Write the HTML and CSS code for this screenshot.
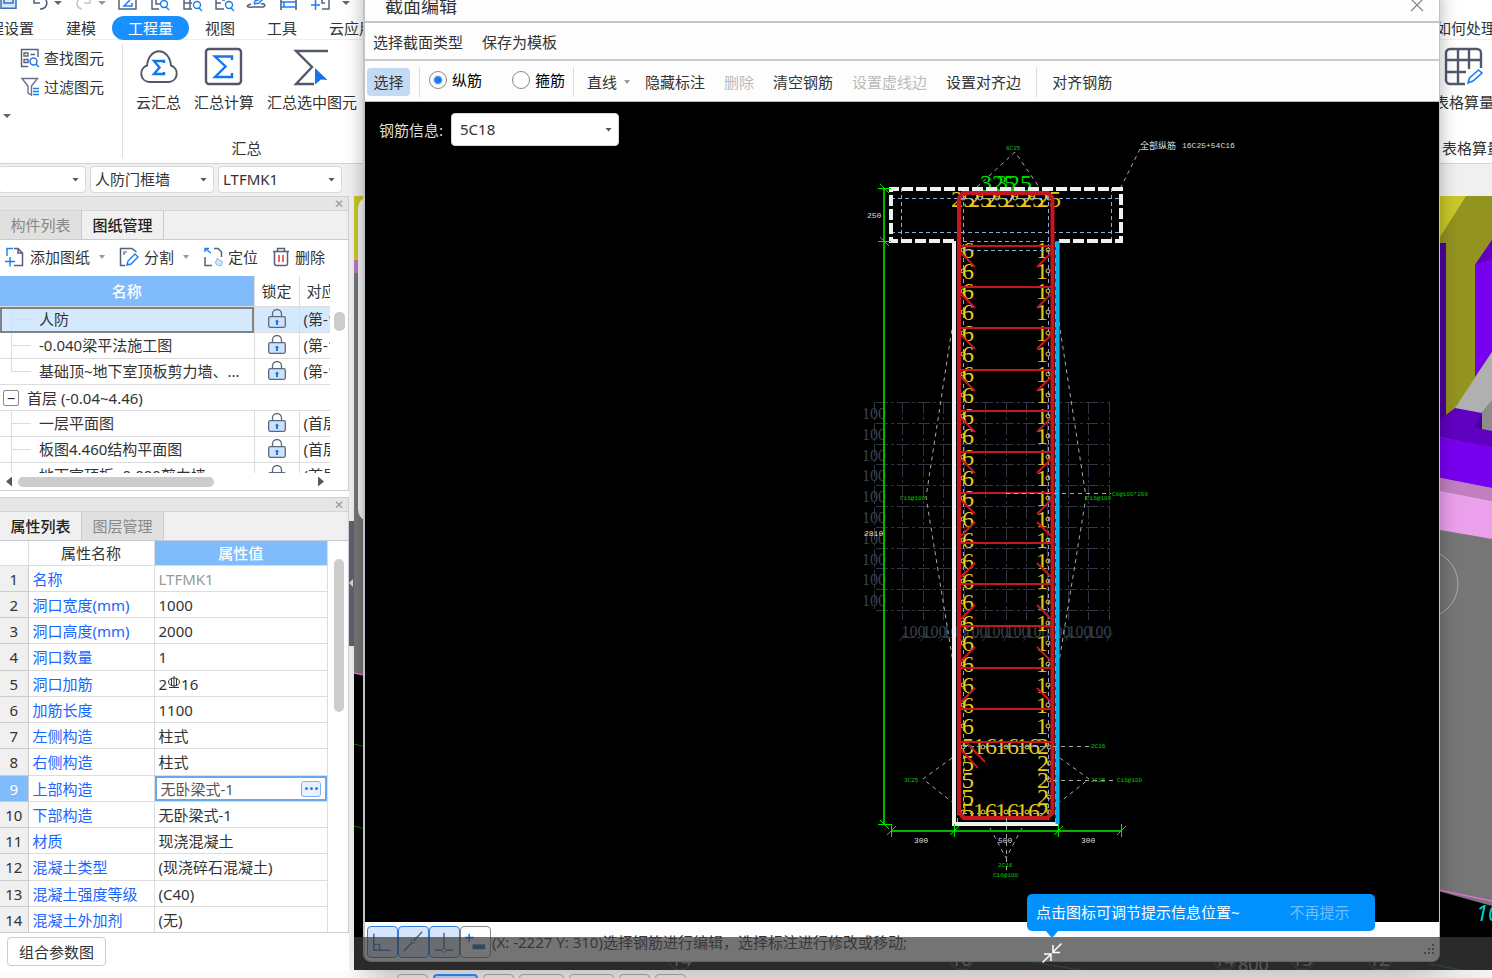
FILE: index.html
```
<!DOCTYPE html>
<html lang="zh-CN">
<head>
  <meta charset="UTF-8">
  <meta name="viewport" content="width=device-width, initial-scale=1.0">
  <title>截面编辑</title>
  <link rel="stylesheet" href="styles.css">
</head>
<body>
  <svg class="defs" aria-hidden="true">
    <symbol id="lock" viewBox="0 0 18 20">
      <path d="M4.500 9V6a4.500 4.500 0 0 1 9 0v3" fill="none" stroke="#5c6880" stroke-width="1.300"/>
      <rect x="0.700" y="8.700" width="16.600" height="10.600" rx="1.500" fill="#cfe2fb" stroke="#5c6880" stroke-width="1.300"/>
      <path d="M9 11.500l2.200 2.200H10V17H8v-3.300H6.800z" fill="#1876e8"/>
    </symbol>
    <symbol id="page" viewBox="0 0 20 20">
      <path d="M9 18.500h8.500V6L13 1.500H9M13 1.500V6h4.500" fill="none" stroke="#55607a" stroke-width="1.500"/>
    </symbol>
  </svg>

  <div class="app">
    <div class="quickbar">
      <svg viewBox="0 0 20 12"><path d="M3 0v8.200h15V0M6 0v3h9V0" fill="#d6e6fb" stroke="#3c6fb8" stroke-width="1.500"/></svg>
      <svg viewBox="0 0 20 12"><path d="M4 0v3h6M10 9c6 0 8-5 6-9" fill="none" stroke="#55607a" stroke-width="1.600"/></svg>
      <i class="caret tight"></i>
      <svg viewBox="0 0 20 12"><path d="M16 0v3h-6M8 9C3 8 2 4 4 0" fill="none" stroke="#c8c8c8" stroke-width="1.600"/></svg>
      <i class="caret tight pale"></i>
      <svg viewBox="0 0 20 12"><path d="M1 0v9h17V0" fill="none" stroke="#55607a" stroke-width="1.500"/><path d="M12 0L6 6h8V3" fill="none" stroke="#1b7ef0" stroke-width="1.500"/></svg>
      <svg viewBox="0 0 20 12"><path d="M2 0v9h7M6 0v4h4" fill="none" stroke="#55607a" stroke-width="1.500"/><circle cx="14" cy="4" r="3.500" fill="none" stroke="#1b7ef0" stroke-width="1.400"/><path d="M16 7l3 3" stroke="#1b7ef0" stroke-width="1.400"/></svg>
      <svg viewBox="0 0 20 12"><path d="M2 0v9h8M2 3h8M8 0v9" fill="none" stroke="#55607a" stroke-width="1.500"/><circle cx="15" cy="5" r="3.500" fill="none" stroke="#1b7ef0" stroke-width="1.400"/><path d="M17 8l3 3" stroke="#1b7ef0" stroke-width="1.400"/></svg>
      <svg viewBox="0 0 20 12"><path d="M2 0v9h8M2 3h5M8 0h3" fill="none" stroke="#55607a" stroke-width="1.500"/><circle cx="15" cy="5" r="3.500" fill="none" stroke="#1b7ef0" stroke-width="1.400"/><path d="M17 8l3 3" stroke="#1b7ef0" stroke-width="1.400"/></svg>
      <svg viewBox="0 0 20 12"><path d="M5 4c-6 2-4 4 2 3h10c3-1 2-4-2-3" fill="none" stroke="#55607a" stroke-width="1.500"/><path d="M8 4l1-3 6-2M8 4l5-1 4-4" fill="none" stroke="#1b7ef0" stroke-width="1.400"/></svg>
      <svg viewBox="0 0 20 12"><path d="M3 0v10M18 0v10" stroke="#55607a" stroke-width="1.600"/><path d="M3 2h15M3 7h15M6 2v5" fill="none" stroke="#1b7ef0" stroke-width="1.500"/></svg>
      <svg viewBox="0 0 20 12"><path d="M12 9h7V0M12 0v3h3" fill="none" stroke="#55607a" stroke-width="1.500"/><path d="M1 5h9M5.500 0v10" stroke="#1b7ef0" stroke-width="1.500"/></svg>
      <i class="caret"></i>
    </div>

    <nav class="tabs">
      <a href="#">工程设置</a>
      <a href="#">建模</a>
      <a href="#" class="active">工程量</a>
      <a href="#">视图</a>
      <a href="#">工具</a>
      <a href="#">云应用</a>
      <a href="#" class="help">如何处理</a>
    </nav>

    <div class="ribbon">
      <div class="group find">
        <button>
          <svg width="20" height="20" viewBox="0 0 20 20"><path d="M8 18.500H1.500v-17H18V9" fill="none" stroke="#55607a" stroke-width="1.400"/><path d="M4 5h4v3H4zM4 11.500h4v3H4zM10.500 6.500H15" fill="none" stroke="#55607a" stroke-width="1.300"/><circle cx="13.500" cy="13.500" r="3.500" fill="none" stroke="#1b7ef0" stroke-width="1.500"/><path d="M16 16l3 3" stroke="#1b7ef0" stroke-width="1.500"/></svg>
          查找图元
        </button>
        <button>
          <svg width="20" height="20" viewBox="0 0 20 20"><path d="M2 1.500h15.500L11.500 9v9l-3.500-2V9z" fill="none" stroke="#6b7284" stroke-width="1.400"/><path d="M13 11.500h6M13 14.500h6M13 17.500h6" stroke="#1b7ef0" stroke-width="1.500"/></svg>
          过滤图元
        </button>
        <i class="caret"></i>
      </div>
      <div class="group sum">
        <div class="tools">
          <button>
            <svg width="40" height="40" viewBox="0 0 40 40"><path d="M10 35a8.500 8.500 0 0 1-2-16.500C10-.5 30-.5 32 18.500A8.500 8.500 0 0 1 30 35z" fill="none" stroke="#50586a" stroke-width="2"/><path d="M25 16v-2H15l5.500 6.500L15 27h10v-2" fill="none" stroke="#1276ee" stroke-width="2.400"/></svg>
            云汇总
          </button>
          <button>
            <svg width="40" height="40" viewBox="0 0 40 40"><rect x="2" y="2" width="35" height="35" rx="3" fill="none" stroke="#50586a" stroke-width="2.400"/><path d="M28 13V9.500H11L21.500 19.500 11 30h17v-4" fill="none" stroke="#1276ee" stroke-width="2.400"/></svg>
            汇总计算
          </button>
          <button>
            <svg width="40" height="40" viewBox="0 0 40 40"><path d="M36 4H4l16 16L4 37h18" fill="none" stroke="#50586a" stroke-width="2.400"/><path d="M23 21l12.500 12-6.500-.5-6 5z" fill="#1276ee"/></svg>
            汇总选中图元
          </button>
        </div>
        <span class="caption">汇总</span>
      </div>
      <div class="group sheet">
        <button>
          <svg width="40" height="40" viewBox="0 0 40 40"><path d="M21 37H6a4 4 0 0 1-4-4V6a4 4 0 0 1 4-4h27a4 4 0 0 1 4 4v15M2 13h35M2 25h20M14 2v35M25 2v20" fill="none" stroke="#50586a" stroke-width="2.400"/><path d="M24 36l1.500-5 9-8 3.500 3-9 8z" fill="none" stroke="#1b7ef0" stroke-width="1.600"/></svg>
          表格算量
        </button>
        <span class="caption">表格算量</span>
      </div>
    </div>

    <div class="pickers">
      <span class="select first"><select aria-label="楼层"><option></option></select></span>
      <span class="select"><select aria-label="构件类型"><option>人防门框墙</option></select></span>
      <span class="select"><select aria-label="构件"><option>LTFMK1</option></select></span>
    </div>

    <div class="main">
      <aside class="sidebar">
        <section class="panel drawings">
          <div class="panel-title"><button aria-label="关闭">✕</button></div>
          <div class="panel-tabs"><button>构件列表</button><button class="active">图纸管理</button></div>
          <div class="panel-tools">
            <button><svg width="20" height="20"><use href="#page"/><path d="M8 1.500H2V9M0 14.500h10M5 10v9.500" fill="none" stroke="#1b7ef0" stroke-width="1.400"/></svg>添加图纸<i class="caret pale"></i></button>
            <button><svg width="20" height="20" viewBox="0 0 20 20"><path d="M6 18.500H1.500v-17H13L17.500 5" fill="none" stroke="#55607a" stroke-width="1.500"/><path d="M5 8V5h3" fill="none" stroke="#55607a" stroke-width="1.200"/><path d="M8 18l1-4 7-7 3 3-7 7z" fill="#fff" stroke="#1b7ef0" stroke-width="1.400"/></svg>分割<i class="caret pale"></i></button>
            <button><svg width="20" height="20" viewBox="0 0 20 20"><path d="M2 10v8.500h7M11 1.500h4L18.500 5v5" fill="none" stroke="#55607a" stroke-width="1.500"/><path d="M8 6L2 1.500M2 5V1.500h4" fill="none" stroke="#1b7ef0" stroke-width="1.400"/><path d="M14 18l-2-3 2-1v-3l2 2 3 1v3l-1 2z" fill="#d6e6fb" stroke="#8ab8f0"/></svg>定位</button>
            <button><svg width="18" height="20" viewBox="0 0 18 20"><path d="M1 4.500h16M5.500 4.500v-3h7v3M2.500 4.500v12a2 2 0 0 0 2 2h9a2 2 0 0 0 2-2v-12" fill="none" stroke="#55607a" stroke-width="1.500"/><path d="M7 8v7M11 8v7" stroke="#e8303a" stroke-width="1.500"/></svg>删除</button>
          </div>
          <div class="grid-wrap">
            <div class="grid-clip">
              <table class="drawing-list">
                <colgroup><col class="c-name"><col class="c-lock"><col></colgroup>
                <thead><tr><th class="on">名称</th><th>锁定</th><th class="cut">对应楼层</th></tr></thead>
                <tbody>
                  <tr class="selected"><td class="name"><i class="branch"></i>人防</td><td><svg class="lock"><use href="#lock"/></svg></td><td class="cut">(第-1层)</td></tr>
                  <tr><td class="name"><i class="branch"></i>-0.040梁平法施工图</td><td><svg class="lock"><use href="#lock"/></svg></td><td class="cut">(第-1层)</td></tr>
                  <tr><td class="name"><i class="branch last"></i>基础顶~地下室顶板剪力墙、...</td><td><svg class="lock"><use href="#lock"/></svg></td><td class="cut">(第-1层)</td></tr>
                  <tr class="floor"><td colspan="3"><button aria-label="折叠">−</button>首层 (-0.04~4.46)</td></tr>
                  <tr><td class="name"><i class="branch"></i>一层平面图</td><td><svg class="lock"><use href="#lock"/></svg></td><td class="cut">(首层)</td></tr>
                  <tr><td class="name"><i class="branch"></i>板图4.460结构平面图</td><td><svg class="lock"><use href="#lock"/></svg></td><td class="cut">(首层)</td></tr>
                  <tr><td class="name"><i class="branch"></i>地下室顶板~0.000剪力墙</td><td><svg class="lock"><use href="#lock"/></svg></td><td class="cut">(首层)</td></tr>
                </tbody>
              </table>
            </div>
            <div class="vscroll"><i></i></div>
          </div>
          <div class="hscroll"><b class="left"></b><i></i><b class="right"></b></div>
        </section>

        <section class="panel props">
          <div class="panel-title"><button aria-label="关闭">✕</button></div>
          <div class="panel-tabs"><button class="active">属性列表</button><button>图层管理</button></div>
          <div class="grid-wrap">
            <div class="grid-clip">
              <table class="prop-list">
                <colgroup><col class="c-num"><col class="c-prop"><col></colgroup>
                <thead><tr><th></th><th>属性名称</th><th class="on">属性值</th></tr></thead>
                <tbody>
                  <tr><th>1</th><td>名称</td><td class="muted">LTFMK1</td></tr>
                  <tr><th>2</th><td>洞口宽度(mm)</td><td>1000</td></tr>
                  <tr><th>3</th><td>洞口高度(mm)</td><td>2000</td></tr>
                  <tr><th>4</th><td>洞口数量</td><td>1</td></tr>
                  <tr><th>5</th><td>洞口加筋</td><td>2<svg class="rebar" viewBox="0 0 14 14"><ellipse cx="7" cy="6" rx="5.500" ry="4" fill="none" stroke="#333"/><path d="M7 0v12M4.500 2v8M9.500 2v8M2 11.500h10" fill="none" stroke="#333"/></svg>16</td></tr>
                  <tr><th>6</th><td>加筋长度</td><td>1100</td></tr>
                  <tr><th>7</th><td>左侧构造</td><td>柱式</td></tr>
                  <tr><th>8</th><td>右侧构造</td><td>柱式</td></tr>
                  <tr class="editing"><th>9</th><td>上部构造</td><td><div class="editor"><input aria-label="上部构造" value="无卧梁式-1"><button aria-label="更多"><i></i><i></i><i></i></button></div></td></tr>
                  <tr><th>10</th><td>下部构造</td><td>无卧梁式-1</td></tr>
                  <tr><th>11</th><td>材质</td><td>现浇混凝土</td></tr>
                  <tr><th>12</th><td>混凝土类型</td><td>(现浇碎石混凝土)</td></tr>
                  <tr><th>13</th><td>混凝土强度等级</td><td>(C40)</td></tr>
                  <tr><th>14</th><td>混凝土外加剂</td><td>(无)</td></tr>
                </tbody>
              </table>
            </div>
            <div class="vscroll"><i></i></div>
          </div>
        </section>
        <div class="side-foot"><button>组合参数图</button></div>
      </aside>
      <div class="splitter"><i><b></b></i></div>

      <!-- 3D model view behind the dialog -->
      <svg class="model" viewBox="354 196 1138 774" preserveAspectRatio="xMaxYMid slice">
        <path d="M354 196h1138v774H354z" fill="#000"/>
        <path d="M354 196h1138v710L1420 886 354 673z" fill="#767676"/>
        <path d="M354 196h9v64h-9z" fill="#c8c828"/><path d="M354 260h9v13h-9z" fill="#b878c0"/>
        <path d="M358 210q0-10 7-12v322q-7-2-7-12z" fill="#f4f4f4"/>
        <path d="M1400 196h92v250h-92z" fill="#939320"/>
        <path d="M1400 196h66l-26 41h-40z" fill="#c8c828"/>
        <path d="M1400 243h46v182l-46 30z" fill="#4a00a0"/>
        <path d="M1475 265l17-25v112l-17 25z" fill="#7800f0"/>
        <path d="M1475 265l17-25v19z" fill="#6000c0"/>
        <path d="M1455 408l37-56v80z" fill="#b0b0b0"/>
        <path d="M1481 413l11-13v32l-11-3z" fill="#8c8c8c"/>
        <path d="M1400 450l55-42 27 5v16l10 2v17l-52-11z" fill="#6000c0"/>
        <path d="M1474 427l8-12v15z" fill="#46009a"/>
        <path d="M1400 430l40 7 52 10v41l-52-10-40-7z" fill="#7800f0"/>
        <path d="M1400 470l92 18v13l-92-18z" fill="#c080c0"/>
        <path d="M1400 483l92 18v38l-92-16z" fill="#eaa0ea"/>
        <circle cx="1424" cy="584" r="34" fill="none" stroke="#aaa"/>
        <path d="M1400 882l92 19M354 673l10 2" stroke="#e070d0" stroke-width="1.500"/>
        <path d="M354 744l12 3M354 826l12 3M1020 960l90 15M1430 964l62 12" stroke="#008000" fill="none"/>
        <g fill="none" stroke="#1f7a1f"><circle cx="680" cy="958" r="12"/><circle cx="962" cy="958" r="12"/><circle cx="1225" cy="958" r="12"/><circle cx="1303" cy="958" r="12"/><circle cx="1380" cy="958" r="12"/></g>
        <g class="axis"><text x="671" y="966">14</text><text x="951" y="966">16</text><text x="1214" y="966">14</text><text x="1238" y="971">800</text><text x="1292" y="966">13</text><text x="1369" y="966">12</text></g>
        <text class="axis-mark" x="1476" y="921">10</text>
      </svg>
    </div>

    <div class="statusbar">
      <i></i><i class="wide on"></i><i></i><i class="wide"></i><i class="wide"></i><i></i><i></i>
    </div>
  </div>

  <div class="dialog" role="dialog" aria-label="截面编辑">
    <header>
      <h1>截面编辑</h1>
      <button aria-label="关闭"><svg width="14" height="14"><path d="M1 1l12 12M13 1L1 13" stroke="#888" stroke-width="1.300"/></svg></button>
    </header>
    <div class="menu"><button>选择截面类型</button><button>保存为模板</button></div>
    <div class="toolbar">
      <button class="pressed">选择</button>
      <i class="sep"></i>
      <label><input type="radio" name="bar" checked>纵筋</label>
      <label class="second"><input type="radio" name="bar">箍筋</label>
      <i class="sep"></i>
      <div class="actions">
        <button>直线<i class="caret pale"></i></button>
        <button>隐藏标注</button>
        <button disabled>删除</button>
        <button>清空钢筋</button>
        <button disabled>设置虚线边</button>
        <button>设置对齐边</button>
      </div>
      <i class="sep"></i>
      <button class="align">对齐钢筋</button>
    </div>
    <div class="canvas">
      <div class="info">
        <label for="bar-info">钢筋信息:</label>
        <span class="select"><select id="bar-info"><option>5C18</option></select></span>
      </div>
      <svg id="section" viewBox="365 102 1074 820" preserveAspectRatio="xMidYMid meet"></svg>
    </div>
    <footer>
      <button class="on" aria-label="正交"><svg viewBox="0 0 30 30"><path d="M6 7v17h17" fill="none" stroke="#2f6fd0" stroke-width="1.600"/><path d="M6 18h6v6" fill="none" stroke="#2f6fd0" stroke-width="1.400"/></svg></button>
      <button class="on" aria-label="中点"><svg viewBox="0 0 30 30"><path d="M5 25L24 5" stroke="#5f6a7c" stroke-width="1.600"/><circle cx="14.500" cy="15" r="1.800" fill="#fff" stroke="#2f6fd0"/></svg></button>
      <button class="on" aria-label="垂点"><svg viewBox="0 0 30 30"><path d="M14.500 6v18M5 24h19" stroke="#5f6a7c" stroke-width="1.600"/><circle cx="14.500" cy="24" r="2" fill="#fff" stroke="#2f6fd0"/></svg></button>
      <button aria-label="动态输入"><svg viewBox="0 0 30 30"><path d="M4 11h9M8.500 7v9" stroke="#1b7ef0" stroke-width="1.600"/><path d="M12 18h13v5H12z" fill="#1f66c8"/></svg></button>
      <span>(X: -2227 Y: 310)选择钢筋进行编辑，选择标注进行修改或移动;</span>
      <svg class="grip" width="12" height="12"><path d="M9 1h2v2H9zM5 5h2v2H5zM9 5h2v2H9zM1 9h2v2H1zM5 9h2v2H5zM9 9h2v2H9z" fill="#5a6070"/></svg>
    </footer>
  </div>

  <div class="shade">
    <svg width="22" height="22" viewBox="0 0 22 22"><path d="M20.500 1.500L12 10M12 3v7.500h7M1.500 20.500L10 12M3 12h7v7" fill="none" stroke="#fff" stroke-width="1.500"/></svg>
  </div>
  <div class="tip">
    <span>点击图标可调节提示信息位置~</span>
    <button>不再提示</button>
  </div>

  <script src="section.js"></script>
</body>
</html>
```
FILE: styles.css
```
* {
  box-sizing: border-box;
}
body {
  margin: 0;
  height: 100vh;
  overflow: hidden;
  position: relative;
  font-family: "Noto Sans", "Noto Sans CJK SC", sans-serif;
  font-size: 15px;
  line-height: 20px;
  color: #333;
  background: #fff;
}
button {
  font: inherit;
  color: inherit;
  background: none;
  border: 0;
  padding: 0;
  white-space: nowrap;
}
a {
  color: inherit;
  text-decoration: none;
}
svg {
  flex: none;
}
.defs {
  position: absolute;
  width: 0;
  height: 0;
}
.app {
  height: 100%;
  display: flex;
  flex-direction: column;
}
.caret {
  flex: none;
  width: 8px;
  height: 4px;
  background: #666;
  clip-path: polygon(0 0, 100% 0, 50% 100%);
}
.caret.pale {
  background: #999;
}

/* top bars */
.quickbar {
  display: flex;
  gap: 12px;
  height: 14px;
  margin-left: -2px;
}
.quickbar svg {
  width: 20px;
  height: 12px;
}
.quickbar .caret {
  margin-top: 1px;
}
.quickbar .tight {
  margin-left: -8px;
}
.tabs {
  display: flex;
  height: 26px;
  padding-top: 2px;
  margin-left: -42px;
  border-bottom: 1px solid #eee;
}
.tabs a {
  flex: none;
  height: 24px;
  line-height: 24px;
  padding: 0 16px;
}
.tabs .active {
  background: #1890ff;
  color: #fff;
  border-radius: 12px;
}
.tabs .help {
  width: 56px;
  margin-left: auto;
  padding: 0;
  white-space: nowrap;
}
.ribbon {
  display: flex;
  flex: none;
  height: 124px;
  padding-top: 4px;
  border-bottom: 1px solid #d4d4d4;
}
.group {
  display: flex;
  flex-direction: column;
}
.find {
  width: 123px;
  height: 114px;
  padding: 4px 0 0 20px;
  gap: 9px;
  border-right: 1px solid #ddd;
}
.find button {
  display: flex;
  align-items: center;
  gap: 4px;
}
.find .caret {
  margin: 8px 0 0 -17px;
}
.sum {
  padding-left: 13px;
  align-items: center;
}
.tools {
  display: flex;
  gap: 13px;
}
.tools button,
.sheet button {
  display: flex;
  flex-direction: column;
  align-items: center;
  gap: 5px;
  padding-top: 3px;
}
.caption {
  margin-top: 26px;
}
.sheet {
  margin-left: auto;
  width: 56px;
  align-items: center;
}
.sheet .caption {
  white-space: nowrap;
  margin-left: 16px;
}
.pickers {
  display: flex;
  flex: none;
  gap: 4px;
  height: 32px;
  padding-top: 2px;
  background: #f0f0f0;
}
.select {
  display: flex;
  align-items: center;
  position: relative;
  width: 124px;
  height: 27px;
  background: #fff;
  border: 1px solid #d8d8d8;
  border-radius: 4px;
}
.select.first {
  width: 88px;
  margin-left: -2px;
}
.select select {
  appearance: none;
  width: 100%;
  height: 100%;
  padding: 0 4px 2px;
  border: 0;
  background: none;
  font: inherit;
  color: #333;
}
.select::after {
  content: "";
  position: absolute;
  right: 6px;
  width: 7px;
  height: 4px;
  background: #555;
  clip-path: polygon(0 0, 100% 0, 50% 100%);
}

/* left side */
.main {
  flex: 1;
  min-height: 0;
  display: flex;
}
.sidebar {
  width: 349px;
  flex: none;
  display: flex;
  flex-direction: column;
}
.panel {
  border: 1px solid #d0d0d0;
  border-left: 0;
  display: flex;
  flex-direction: column;
}
.drawings {
  flex: none;
  margin-bottom: 6px;
}
.props {
  flex: 1;
  min-height: 0;
}
.panel-title {
  flex: none;
  height: 14px;
  background: #e6e6e6;
  text-align: right;
  border-bottom: 1px solid #d4d4d4;
}
.panel-title button {
  display: block;
  margin-left: auto;
  padding-right: 4px;
  font-size: 12px;
  line-height: 14px;
  color: #999;
}
.panel-tabs {
  flex: none;
  display: flex;
  height: 29px;
  background: #f0f0f0;
  border-bottom: 1px solid #c8ccd0;
}
.panel-tabs button {
  width: 82px;
  color: #888;
  background: #e0e0e0;
  border-right: 1px solid #c8ccd0;
}
.panel-tabs .active {
  color: #222;
  font-weight: 500;
  background: #f0f0f0;
}
.panel-tools {
  display: flex;
  gap: 14px;
  height: 36px;
  padding: 0 0 2px 5px;
}
.panel-tools button {
  display: flex;
  align-items: center;
  gap: 5px;
}
.panel-tools .caret {
  width: 6px;
  margin-left: 4px;
}
.grid-wrap {
  display: flex;
  flex: 1;
  min-height: 0;
}
.drawings .grid-wrap {
  height: 197px;
  flex: none;
}
.grid-clip {
  flex: 1;
  overflow: hidden;
}
.vscroll {
  width: 18px;
  padding: 36px 3px 0 4px;
}
.vscroll i {
  display: block;
  height: 19px;
  background: #ccc;
  border-radius: 5px;
}
.props .vscroll {
  width: 20px;
  padding: 18px 4px 0 6px;
}
.props .vscroll i {
  height: 153px;
}
table {
  width: 100%;
  table-layout: fixed;
  border-collapse: collapse;
}
th,
td {
  height: 26px;
  padding: 0 4px;
  font-weight: 400;
  white-space: nowrap;
  overflow: hidden;
  border: 1px solid #ddd;
}
tr > :first-child {
  border-left: 0;
}
tr > :last-child {
  border-right: 0;
}
thead .on {
  background: #80bbfb;
  color: #fff;
  font-weight: 500;
}
.c-name {
  width: 254px;
}
.c-lock {
  width: 45px;
}
.drawing-list {
  margin-top: -1px;
}
.drawing-list thead th {
  height: 31px;
}
.drawing-list td {
  text-align: center;
}
.drawing-list .name {
  text-align: left;
  padding: 0 0 0 11px;
}
.drawing-list .cut {
  text-align: left;
  text-overflow: clip;
}
.drawing-list thead .cut {
  padding-left: 7px;
}
.branch {
  display: inline-block;
  vertical-align: top;
  width: 20px;
  height: 25px;
  margin-right: 8px;
  border-left: 1px solid #ddd;
  background: linear-gradient(#ddd, #ddd) 0 12px / 20px 1px no-repeat;
}
.branch.last {
  height: 13px;
}
.drawing-list .name,
.drawing-list .cut {
  line-height: 25px;
}
.selected td {
  background: #d5e9fe;
}
.selected .name {
  outline: 2px solid #808488;
  outline-offset: -2px;
}
.lock {
  display: block;
  width: 18px;
  height: 20px;
  margin: -3px auto 0;
}
.drawing-list .floor td {
  text-align: left;
  padding-left: 3px;
}
.floor button {
  width: 16px;
  height: 16px;
  margin-right: 8px;
  line-height: 12px;
  border: 1px solid #888;
  border-radius: 2px;
}
.hscroll {
  display: flex;
  align-items: center;
  height: 17px;
  padding: 0 24px 0 6px;
}
.hscroll i {
  width: 196px;
  height: 10px;
  margin: 0 auto 0 6px;
  background: #ccc;
  border-radius: 5px;
}
.hscroll b {
  width: 6px;
  height: 10px;
  background: #50586a;
}
.hscroll .left {
  clip-path: polygon(100% 0, 100% 100%, 0 50%);
}
.hscroll .right {
  clip-path: polygon(0 0, 0 100%, 100% 50%);
}
.c-num {
  width: 28px;
}
.c-prop {
  width: 126px;
}
.prop-list {
  margin-top: -1px;
}
.prop-list thead th {
  height: 25px;
}
/* the rows share out a few spare pixels */
.prop-list tbody tr:nth-child(4n) th {
  height: 27px;
}
.prop-list tbody th {
  padding: 0;
  background: #f0f0f0;
  border-color: #ccc;
}
.prop-list tbody td:nth-child(2) {
  color: #1a66ff;
}
.prop-list tr > :last-child {
  border-right: 1px solid #ddd;
}
.prop-list .muted {
  color: #999;
}
.rebar {
  width: 14px;
  height: 14px;
}
.prop-list .editing th {
  background: #80bbfb;
  color: #fff;
}
.prop-list .editing td:last-child {
  padding: 0;
}
.editor {
  display: flex;
  align-items: center;
  height: 25px;
  padding: 0 4px;
  border: 2px solid #68a8ee;
}
.editor input {
  flex: 1;
  min-width: 0;
  padding: 0;
  border: 0;
  font: inherit;
  color: #555;
}
.editor button {
  display: flex;
  align-items: center;
  justify-content: center;
  gap: 2px;
  width: 20px;
  height: 16px;
  background: #e8f2fd;
  border: 1px solid #80b4ee;
  border-radius: 3px;
}
.editor button i {
  width: 3px;
  height: 3px;
  background: #2c7ee0;
  border-radius: 50%;
}
.side-foot {
  padding: 4px 7px;
}
.side-foot button {
  height: 29px;
  padding: 0 11px;
  border: 1px solid #ccc;
  border-radius: 4px;
}
.splitter {
  width: 5px;
  display: flex;
  flex-direction: column;
  justify-content: center;
  background: #f0f0f0;
}
.splitter i {
  display: flex;
  align-items: center;
  height: 125px;
  background: #5a6270;
}
.splitter b {
  width: 4px;
  height: 8px;
  background: #d0d4d8;
  clip-path: polygon(100% 0, 100% 100%, 0 50%);
}
.model {
  flex: 1;
  min-width: 0;
  height: 100%;
}
.axis {
  fill: #b0b0b0;
  font-size: 18px;
}
.axis-mark {
  fill: #00d0c8;
  font-size: 22px;
  font-style: italic;
}
.statusbar {
  display: flex;
  gap: 5px;
  flex: none;
  height: 8px;
  padding: 4px 0 0 397px;
  overflow: hidden;
  background: linear-gradient(90deg, #fcfcfc 345px, #d8d6d6 390px, #d8d6d6 1400px, #f4f4f4);
}
.statusbar i {
  width: 31px;
  height: 20px;
  border: 1px solid #999;
  border-radius: 4px;
}
.statusbar .wide {
  width: 45px;
}
.statusbar .on {
  background: #a8c4ec;
  border: 2px solid #3080e0;
}

/* section editor window */
.dialog {
  position: absolute;
  top: -10px;
  right: 52px;
  bottom: 16px;
  left: 363px;
  display: flex;
  flex-direction: column;
  background: #fdfdfd;
  border: 2px solid #c0c4c8;
  border-width: 0 1px 1px 2px;
  border-radius: 0 0 8px 8px;
  box-shadow: 0 0 18px rgba(0, 0, 0, 0.3);
}
.dialog header {
  flex: none;
  display: flex;
  align-items: center;
  justify-content: space-between;
  height: 33px;
  padding: 0 15px 0 20px;
  border-bottom: 2px solid #c0c6cc;
}
.dialog h1 {
  margin: 0;
  font-size: 18px;
  font-weight: 400;
}
.menu {
  flex: none;
  display: flex;
  gap: 19px;
  height: 38px;
  padding: 2px 0 0 8px;
  border-bottom: 2px solid #c8ccd0;
}
.toolbar {
  flex: none;
  display: flex;
  align-items: center;
  height: 41px;
  padding: 2px 2px 0;
  border-bottom: 1px solid #bbb;
}
.toolbar .pressed {
  width: 43px;
  height: 28px;
  margin-right: 9px;
  background: #c3daf4;
  border-radius: 4px;
}
.sep {
  width: 1px;
  height: 30px;
  background: #ddd;
}
.toolbar label {
  display: flex;
  align-items: center;
  gap: 5px;
  margin-left: 9px;
  padding-bottom: 4px;
  color: #000;
}
.toolbar label.second {
  margin: 0 8px 0 30px;
}
.toolbar input {
  appearance: none;
  width: 18px;
  height: 18px;
  margin: 0;
  background: #fff;
  border: 1px solid #888;
  border-radius: 50%;
}
.toolbar input:checked {
  background: radial-gradient(circle, #1f7ae8 3px, #fff 5px);
}
.actions {
  display: flex;
  gap: 19px;
  padding: 0 15px 0 13px;
}
.actions button {
  display: flex;
  align-items: center;
}
.actions .caret {
  width: 6px;
  margin: 0 -4px 0 7px;
}
.toolbar button:disabled {
  color: #bbb;
}
.align {
  margin-left: 15px;
}
.canvas {
  flex: 1;
  min-height: 0;
  position: relative;
  background: #000;
}
.info {
  position: absolute;
  top: 11px;
  left: 14px;
  display: flex;
  align-items: center;
  gap: 8px;
  color: #ddd;
}
.info .select {
  width: 168px;
  height: 33px;
}
.info select {
  padding-left: 8px;
}
#section {
  display: block;
  width: 100%;
  height: 100%;
}
.dialog footer {
  flex: none;
  display: flex;
  align-items: center;
  height: 39px;
  padding: 0 10px 0 2px;
}
.dialog footer button {
  width: 31px;
  height: 32px;
  border: 1px solid #888;
  border-radius: 4px;
}
.dialog footer .on {
  background: #d6e5fb;
  border-color: #2f7ee0;
}
.dialog footer span {
  margin-left: 1px;
}
.grip {
  margin: 14px -6px 0 auto;
}
.shade {
  position: absolute;
  right: 0;
  bottom: 8px;
  left: 354px;
  height: 33px;
  padding: 5px 0 0 687px;
  background: rgba(59, 59, 59, 0.71);
}
.tip {
  position: absolute;
  bottom: 47px;
  left: 1027px;
  display: flex;
  align-items: center;
  gap: 50px;
  height: 37px;
  padding: 0 25px 2px 9px;
  color: #fff;
  background: #0091ff;
  border-radius: 5px;
}
.tip button {
  color: #6cc0ff;
}
.tip::after {
  content: "";
  position: absolute;
  top: 36px;
  left: 18px;
  width: 14px;
  height: 8px;
  background: #0091ff;
  clip-path: polygon(0 0, 100% 0, 50% 100%);
}

/* section drawing */
.bar-text {
  font-family: "Liberation Serif", serif;
  font-size: 24px;
  fill: #e8c81c;
}
.bar-text.green {
  fill: #00dc00;
}
.grid-text {
  font-family: "Liberation Serif", serif;
  font-size: 16px;
  fill: #39424e;
}
.dim-text {
  font-family: "Liberation Mono", "Noto Sans CJK SC", monospace;
  font-size: 8px;
  fill: #ddd;
}
.dim-text.wide {
  font-size: 9px;
}
.note {
  font-family: "Liberation Mono", monospace;
  font-size: 6px;
  fill: #00c800;
}
.leader {
  stroke: #aaa;
  stroke-dasharray: 4 4;
}
.grid-line {
  stroke: #2e3742;
  stroke-dasharray: 12 3 3 3;
}
.cover {
  stroke: #88acd8;
  stroke-dasharray: 4 3;
}
.edge {
  stroke: #f0f0f0;
  stroke-width: 4;
}
.edge.dashed {
  stroke-dasharray: 11 3;
}
.edge.aligned {
  stroke: #00aeef;
}
.stirrup {
  stroke: #c8161e;
  stroke-width: 4;
}
.stirrup.thin {
  stroke-width: 2;
}
.bars {
  stroke: #e8a81c;
  stroke-dasharray: 5 3;
}
.dim {
  stroke: #00b400;
  stroke-width: 2;
}
.tick {
  stroke: #00e400;
}
.rebar-dot {
  stroke: #f0d820;
}
```
FILE: section.js
```
const svg = document.getElementById('section');
let out = '';

function path(cls, d) {
  out += `<path class="${cls}" d="${d}" fill="none"/>`;
}
function text(cls, x, y, value) {
  out += `<text class="${cls}" x="${x}" y="${y}">${value}</text>`;
}
function dot(x, y) {
  out += `<circle class="rebar-dot" cx="${x}" cy="${y}" r="2" fill="none"/>`;
}

// Background grid, 100mm step
for (let i = 0; i <= 10; i++) {
  const x = Math.round(902 + i * 20.7) + 0.5;
  const y = Math.round(402 + i * 20.8) + 0.5;
  path('grid-line', `M${x} 402V620M${x - 3} 641l6 -8`);
  path('grid-line', `M876 ${y}H1110`);
  if (i < 10) {
    text('grid-text', 862, y + 16, '100');
    text('grid-text', x - 1, 637, '100');
  }
}
path('grid-line', 'M874.5 402V610M902 637.5H1110');

// Leaders
path('leader', 'M977 187L1015 152L1039 187M1140 149L1121 187');
path('leader', 'M953 322L926 497L953 662M1059 322L1086 497L1059 662');
path('leader', 'M952 758L923 779L952 802M1060 758L1089 779L1060 802');

// Bars along both sides
for (let i = 0; i < 24; i++) {
  const y = Math.round(258 + i * 20.7);
  text('bar-text', 962, y, '6');
  text('bar-text', 1036, y, '1');
  dot(963, y - 8);
  dot(1048, y - 8);
}
text('bar-text green', 980, 191, '325');
text('bar-text green', 996, 191, '325');
for (let i = 0; i < 6; i++) {
  const x = Math.round(963 + i * 17.2);
  text('bar-text', x - 12, 207, '25');
  dot(x, 198);
}
[754, 819].forEach(y => {
  text('bar-text', 962, y, '5');
  [973, 995, 1016].forEach(x => text('bar-text', x, y, '16'));
  text('bar-text', 1037, y, '2');
  [963, 983, 1006, 1027, 1049].forEach(x => dot(x, y - 7));
});
[771, 788, 805].forEach(y => {
  text('bar-text', 962, y, '5');
  text('bar-text', 1037, y, '2');
  dot(1049, y - 8);
});
path('bars', 'M957.5 242V822M1055.5 242V822');

// Cover lines
path('cover', 'M891 198.5H1121M891 232.5H1121M901.5 188V241M1111.5 188V241');
path('cover', 'M963.5 188V820M1048.5 188V820M963 241.5H1049M963 250.5H1049M963 746.5H1049M963 813.5H1049');

// Concrete outline
path('edge dashed', 'M954 241H891V189H1121V241H1058');
path('edge', 'M954 241V824H1058');
path('edge aligned', 'M1057.5 241V824');

// Stirrups and ties
path('stirrup', 'M963 193H1048L1052.5 198V813L1047 818H964L959 813V198Z');
path('stirrup thin', 'M959 742H1053M961 750L978 768M967 743L985 762');
[246, 287, 328, 370, 411, 452, 493].forEach(y => {
  path('stirrup thin', `M959 ${y}H1053M961 ${y + 7}l14 14M1051 ${y + 7}l-14 14`);
});
[543, 584, 626, 668, 709].forEach(y => {
  path('stirrup thin', `M959 ${y}H1053M961 ${y - 7}l14 -14M1051 ${y - 7}l-14 -14`);
});
path('leader', 'M1006 493.5H1111M1053 746.5H1090M1053 780.5H1116');
path('leader', 'M990 828L1006 858L1022 828M1006.5 818V870');

// Dimensions
path('dim', 'M884 188V824M891 831H1121');
[188, 241, 824].forEach(y => path('tick', `M878 ${y + 0.5}H891M880 ${y - 4}l9 9`));
[891, 954, 1058, 1121].forEach(x => path('tick', `M${x + 0.5} 824V837M${x - 4} 835l9 -9`));
text('dim-text', 867, 218, '250');
text('dim-text', 864, 536, '2810');
text('dim-text', 914, 843, '300');
text('dim-text', 998, 843, '500');
text('dim-text', 1081, 843, '300');
text('dim-text wide', 1140, 149, '全部纵筋');
text('dim-text', 1182, 148, '16C25+54C16');

text('note', 1006, 150, '6C25');
text('note', 900, 500, 'C16@100');
text('note', 1086, 500, 'C16@100');
text('note', 1112, 496, 'C8@100*200');
text('note', 904, 782, '3C25');
text('note', 1091, 748, '2C16');
text('note', 1091, 782, '2C25');
text('note', 1117, 782, 'C16@100');
text('note', 998, 867, '2C16');
text('note', 993, 877, 'C16@100');

svg.innerHTML = out;
```
